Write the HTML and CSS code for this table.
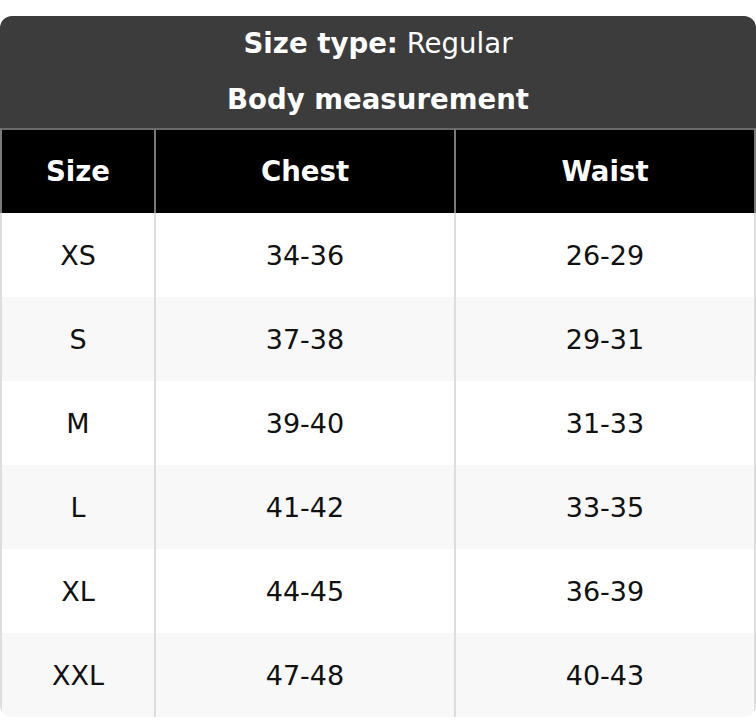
FILE: index.html
```html
<!DOCTYPE html>
<html lang="en">
<head>
<meta charset="utf-8">
<title>Size chart</title>
<link rel="stylesheet" href="styles.css">
</head>
<body>
<div class="chart">
  <div class="chart-title">
    <div class="title-line"><strong>Size type:</strong>&nbsp;Regular</div>
    <div class="title-line"><strong>Body measurement</strong></div>
  </div>
  <div class="grid">
    <div class="cell head first">Size</div>
    <div class="cell head">Chest</div>
    <div class="cell head last">Waist</div>

    <div class="cell first">XS</div><div class="cell">34-36</div><div class="cell last">26-29</div>
    <div class="cell first alt">S</div><div class="cell alt">37-38</div><div class="cell last alt">29-31</div>
    <div class="cell first">M</div><div class="cell">39-40</div><div class="cell last">31-33</div>
    <div class="cell first alt">L</div><div class="cell alt">41-42</div><div class="cell last alt">33-35</div>
    <div class="cell first">XL</div><div class="cell">44-45</div><div class="cell last">36-39</div>
    <div class="cell first alt bottom">XXL</div><div class="cell alt bottom">47-48</div><div class="cell last alt bottom">40-43</div>
  </div>
</div>
</body>
</html>
```
FILE: styles.css
```css
html, body {
  margin: 0;
  padding: 0;
  background: #ffffff;
}
body {
  padding-top: 16px;
  font-family: "DejaVu Sans", "Liberation Sans", sans-serif;
}
.chart {
  width: 756px;
  border-radius: 12px;
  overflow: hidden;
}
.chart-title {
  background: #3c3c3c;
  color: #ffffff;
  padding-bottom: 1px;
}
.title-line {
  height: 56px;
  display: flex;
  align-items: center;
  justify-content: center;
  font-size: 27.6px;
}
.title-line:first-child {
  margin-top: -1px;
}
.title-line strong {
  font-weight: bold;
}
.grid {
  display: grid;
  grid-template-columns: 154px 300px 302px;
  grid-template-rows: 85px;
  grid-auto-rows: 84px;
}
.cell {
  display: flex;
  align-items: center;
  justify-content: center;
  font-size: 27px;
  color: #111111;
  background: #ffffff;
  border-left: 2px solid #dddddd;
}
.cell.alt {
  background: #f8f8f8;
}
.cell.last {
  border-right: 2px solid #dddddd;
}
.cell.bottom {
  border-bottom: 2px solid #dddddd;
  height: 84px;
}
.cell.head {
  background: #000000;
  color: #ffffff;
  font-weight: bold;
  font-size: 27.6px;
  border-top: 2px solid #6a6a6a;
  border-left-color: #7a7a7a;
  height: 83px;
}
.cell.head.last {
  border-right-color: #7a7a7a;
}
```
